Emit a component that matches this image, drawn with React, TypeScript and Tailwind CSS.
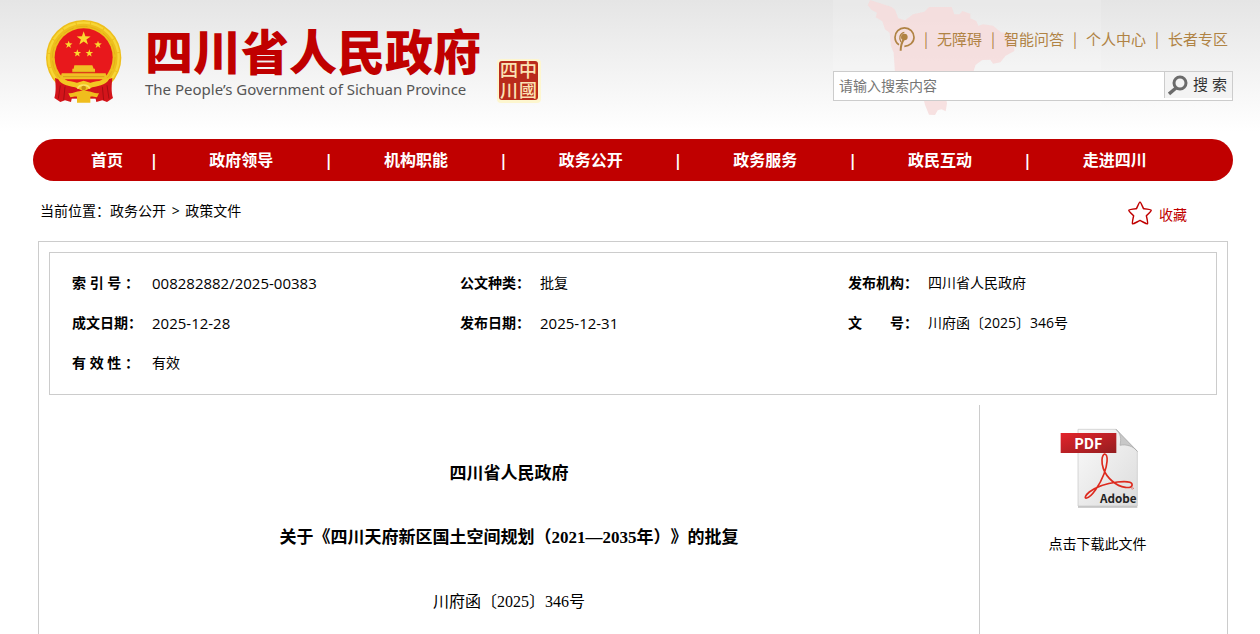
import { Fragment } from "react";

const topLinks = ["无障碍", "智能问答", "个人中心", "长者专区"];

const navItems = ["政府领导", "机构职能", "政务公开", "政务服务", "政民互动", "走进四川"];

const docInfo = [
  { label: "索 引 号 ：", value: "008282882/2025-00383", numeric: true },
  { label: "公文种类：", value: "批复" },
  { label: "发布机构：", value: "四川省人民政府" },
  { label: "成文日期：", value: "2025-12-28", numeric: true },
  { label: "发布日期：", value: "2025-12-31", numeric: true },
  { label: "文　　号：", value: "川府函〔2025〕346号" },
  { label: "有 效 性 ：", value: "有效" },
];

const Star = ({ x, y, r }: { x: number; y: number; r: number }) => {
  const points = Array.from({ length: 10 }, (_, i) => {
    const radius = i % 2 === 0 ? r : r * 0.4;
    const angle = (Math.PI / 5) * i - Math.PI / 2;
    return `${x + radius * Math.cos(angle)},${y + radius * Math.sin(angle)}`;
  }).join(" ");
  return <polygon points={points} fill="#fbd92e" />;
};

const Emblem = () => (
  <svg width="77" height="85" viewBox="46 27 231 255" aria-hidden="true">
    <circle cx="162" cy="143" r="113" fill="#eebf1c" />
    <circle cx="162" cy="143" r="105" fill="none" stroke="#f7d636" strokeWidth="7" strokeDasharray="40 3" />
    <circle cx="162" cy="143" r="94" fill="none" stroke="#dcaa18" strokeWidth="2" strokeDasharray="34 8" />
    <circle cx="162" cy="142" r="87" fill="#e8181c" />
    <Star x={162} y={86} r={22} />
    <Star x={117} y={104} r={12} />
    <Star x={205} y={104} r={12} />
    <Star x={143} y={130} r={12} />
    <Star x={179} y={130} r={12} />
    {/* gate tower */}
    <path d="M134 166h54l4 10h-60zM128 176h68v10h-68zM96 190h132l4 18h-140z" fill="#f0c024" />
    <path d="M128 186h68M100 200h124" stroke="#c98f12" strokeWidth="2" />
    {/* drapery */}
    <path d="M76 204c32 10 46 14 56 34l-8 38-18-5-14 5-18-12c6-18 4-40 2-60zM248 204c-32 10-46 14-56 34l8 38 18-5 14 5 18-12c-6-18-4-40-2-60z" fill="#d3141a" />
    <path d="M120 216h84v50h-84z" fill="#d3141a" />
    <path d="M92 226l-6 40M106 230l-4 40M232 226l6 40M218 230l4 40" stroke="#a50e12" strokeWidth="3" />
    <path d="M84 202c22 12 44 12 58 16l20-6 20 6c14-4 36-4 58-16-4 20-28 26-52 30l-26 12-26-12c-24-4-48-10-52-30z" fill="#f3c622" />
    <path d="M116 250c18 0 26-8 46-8s28 8 46 8l-6 12c-10-2-16-4-20-2v18h-40v-18c-4-2-10 0-20 2z" fill="#f0bd1d" />
    <path d="M144 236c4-14 32-14 36 0" fill="none" stroke="#fbe266" strokeWidth="5" />
    <circle cx="162" cy="234" r="7" fill="#c98f12" />
  </svg>
);

const Seal = () => (
  <svg width="44" height="44" viewBox="0 0 44 44" role="img" aria-label="中国四川">
    <rect width="44" height="44" rx="4" fill="#fdf6cf" />
    <rect x="2" y="2" width="39" height="39" rx="3" fill="#b92a1b" />
    <g
      fill="#fbe3b4"
      fontFamily="'Liberation Sans', 'Noto Sans CJK SC', sans-serif"
      fontSize="18"
      fontWeight="500"
      textAnchor="middle"
    >
      <text x="12" y="18">四</text>
      <text x="31" y="18">中</text>
      <text x="12" y="38">川</text>
      <text x="31" y="38">國</text>
    </g>
  </svg>
);

const ProvinceMap = () => (
  <svg
    width="268"
    height="119"
    viewBox="39 0 804 357"
    className="absolute top-0 right-[132px]"
    aria-hidden="true"
  >
    <rect x="39" width="804" height="357" fill="#fff" opacity="0.15" />
    <path
      d="M150 0l-7 16 12 14 16 8-4 14 20 12 8 24 14 10 4 40 8 20 4 60 30 40 50 16 10 40 12 30 18 1 8-14 12-3 12 6 4-24-4-20 50-30 46-26-12-22 6-18 20-14 24-1 8 12 22-4 16-20 26-14-2-38-10-14-28-4-24-20-30-4-14 4-6-14-18-8 0-14-24-8-8 10-16 0-8-22-68 0-14 14-34 8-24 18-20-6-10-26-10-8z"
      fill="#f6dcdc"
      opacity="0.85"
    />
  </svg>
);

const AccessIcon = () => (
  <svg width="21" height="24" viewBox="0 0 63 72" fill="none" stroke="#b08344" strokeWidth="5" aria-hidden="true">
    <path d="M15 53C6 48 3 40 3 31A28 28 0 0 1 60 31C60 47 47 57 31 58" />
    <path d="M21 45C14 36 17 18 31 16" strokeWidth="4" />
    <circle cx="31" cy="30" r="10" fill="#b08344" stroke="none" />
    <path d="M31 34C23 46 20 54 20 71" strokeWidth="6" />
  </svg>
);

const SearchIcon = () => (
  <svg width="20" height="21" viewBox="0 0 20 21" fill="none" stroke="#6b6b6b" strokeWidth="3" aria-hidden="true">
    <circle cx="12" cy="8" r="6" />
    <path d="M8 13l-7 6" strokeWidth="3.4" />
  </svg>
);

const PdfIcon = () => (
  <svg width="80" height="82" viewBox="-6 0 240 246" aria-hidden="true">
    <defs>
      <linearGradient id="page" x1="0" y1="0" x2="1" y2="1">
        <stop offset="0" stopColor="#fafafa" />
        <stop offset="1" stopColor="#dcdcdc" />
      </linearGradient>
      <linearGradient id="band" x1="0" y1="0" x2="1" y2="1">
        <stop offset="0" stopColor="#e3242b" />
        <stop offset="1" stopColor="#941d20" />
      </linearGradient>
    </defs>
    <path d="M54 4h114l64 66v164H54z" fill="url(#page)" stroke="#c4c4c4" strokeWidth="2" />
    <path d="M54 237h178" stroke="#a0a0a0" strokeWidth="3" />
    <path d="M168 4c14 10 16 30 12 48 18-4 40 2 52 18z" fill="#c8c8c8" stroke="#a8a8a8" strokeWidth="2" />
    <g fill="none" stroke="#dd2a1e" strokeLinecap="round">
      <path
        d="M134 78c-10 4-10 28-4 44 10 28 38 52 66 56 14 2 22-2 20-10-2-8-24-8-44-6-32 4-66 16-84 30-12 10-16 20-8 18 14-2 40-40 52-72 10-26 14-58 2-60z"
        strokeWidth="5"
      />
      <circle cx="217" cy="181" r="3" strokeWidth="1" />
    </g>
    <rect x="2" y="15" width="167" height="60" fill="url(#band)" />
    <text x="85" y="62" fill="#fff" fontFamily="'Noto Sans CJK SC', sans-serif" fontSize="43" fontWeight="700" textAnchor="middle">
      PDF
    </text>
    <text x="175" y="225" fill="#222" fontFamily="'Noto Sans CJK SC', sans-serif" fontSize="35" fontWeight="700" textAnchor="middle">
      Adobe
    </text>
  </svg>
);

const Header = () => (
  <header className="bg-linear-to-b from-[#e5e5e5] to-white to-95% pl-[6px]">
    <div className="relative max-w-[1200px] mx-auto pb-[35px] flex justify-between items-start">
      <ProvinceMap />

      <a href="#" className="relative flex items-start pl-3 pt-[19px]">
        <Emblem />
        <div className="pl-[23px] pt-2 font-['Liberation_Sans','Noto_Sans_CJK_SC',sans-serif]">
          <h1 className="text-[48px] leading-[54px] font-black text-[#c00000]">四川省人民政府</h1>
          <p className="text-[15px] leading-4 text-[#555] font-['Noto_Sans',sans-serif]">
            The People’s Government of Sichuan Province
          </p>
        </div>
        <div className="pl-4 pt-10">
          <Seal />
        </div>
      </a>

      <div className="relative w-[400px] pt-[25px]">
        <div className="flex items-center justify-end pr-[5px] text-[15px] leading-7 text-[#b08344]">
          <a href="#" aria-label="无障碍浏览">
            <AccessIcon />
          </a>
          {topLinks.map((link) => (
            <Fragment key={link}>
              <span className="w-[22px] text-center font-['Noto_Sans_CJK_SC',sans-serif]">|</span>
              <a href="#">{link}</a>
            </Fragment>
          ))}
        </div>

        <form className="mt-[18px] h-[30px] flex border border-[#ccc] bg-white" onSubmit={(e) => e.preventDefault()}>
          <input
            type="text"
            aria-label="搜索"
            placeholder="请输入搜索内容"
            className="flex-1 min-w-0 px-[5px] text-sm text-[#333] placeholder:text-[#757575] outline-none"
          />
          <button
            type="submit"
            className="w-[68px] h-[26px] border-l border-[#ccc] bg-[#f3f3f3] pl-[3px] flex items-center gap-[5px] text-[15px] text-[#333] whitespace-nowrap"
          >
            <SearchIcon />
            搜 索
          </button>
        </form>
      </div>
    </div>
  </header>
);

const NavBar = () => (
  <nav className="h-[42px] rounded-full bg-[#c00000] pl-[27px] pr-[31px] text-base font-bold text-white">
    <ul className="h-full flex items-center">
      <li className="w-[94px] text-center">
        <a href="#">首页</a>
      </li>
      {navItems.map((item) => (
        <Fragment key={item}>
          <li className="w-0 flex justify-center" aria-hidden="true">
            |
          </li>
          <li className="flex-1 text-center">
            <a href="#">{item}</a>
          </li>
        </Fragment>
      ))}
    </ul>
  </nav>
);

const App = () => {
  return (
    <div className="min-h-screen bg-white text-sm text-black font-['Open_Sans','Noto_Sans_CJK_SC',sans-serif]">
      <Header />

      <div className="pl-[6px]">
        <div className="max-w-[1200px] mx-auto">
          <NavBar />

          <div className="h-[60px] pl-[7px] pr-[46px] flex items-center justify-between">
            <div>
              当前位置：<a href="#">政务公开</a> <span className="px-0.5">&gt;</span> <a href="#">政策文件</a>
            </div>
            <button type="button" className="flex items-center gap-[7px] pt-1 text-[#c00000]">
              <svg width="24" height="24" viewBox="0 0 24 24" fill="none" stroke="#c00000" strokeWidth="1.5" strokeLinejoin="round" aria-hidden="true">
                <path d="M12 1C12.6 1 13 2 15.6 7.8 21 8.400 23 8.600 23.200 9.300 23.400 10 21 12 18.400 14.800 19.800 21 20 22.300 19.500 22.800 18.800 23.200 17 22 12 19.400 7 22 5.200 23.200 4.500 22.800 4 22.300 4.200 21 5.600 14.800 3 12 .6 10 .8 9.300 1 8.600 3 8.400 8.400 7.800 11 2 11.400 1 12 1z" />
              </svg>
              <span className="pt-1">收藏</span>
            </button>
          </div>

          <main className="mx-[5px] border border-[#ccc] pt-[10px]">
            <dl className="mx-[10px] mb-[10px] border border-[#ccc] pt-[10px] pb-[11px] pr-0.5 grid grid-cols-3">
              {docInfo.map(({ label, value, numeric }) => (
                <div key={label} className="flex pl-[22px] leading-10">
                  <dt className="w-20 font-bold">{label}</dt>
                  <dd className={numeric ? "text-[15px] leading-10" : ""}>{value}</dd>
                </div>
              ))}
            </dl>

            <div className="flex">
              <article className="flex-1 border-r border-[#ccc] pt-[53px] pb-16 flex flex-col gap-8 text-center leading-8 [text-spacing-trim:space-all] font-['Liberation_Serif','Noto_Sans_CJK_SC',serif]">
                <h2 className="text-[17px] leading-8 font-bold">四川省人民政府</h2>
                <h2 className="text-[17px] leading-8 font-bold">
                  关于《四川天府新区国土空间规划（2021—2035年）》的批复
                </h2>
                <p className="text-base leading-8">川府函〔2025〕346号</p>
              </article>

              <aside className="w-[247px] pr-3 pt-[23px]">
                <a href="#" className="flex flex-col items-center gap-6">
                  <PdfIcon />
                  点击下载此文件
                </a>
              </aside>
            </div>
          </main>
        </div>
      </div>
    </div>
  );
};

export default App;
